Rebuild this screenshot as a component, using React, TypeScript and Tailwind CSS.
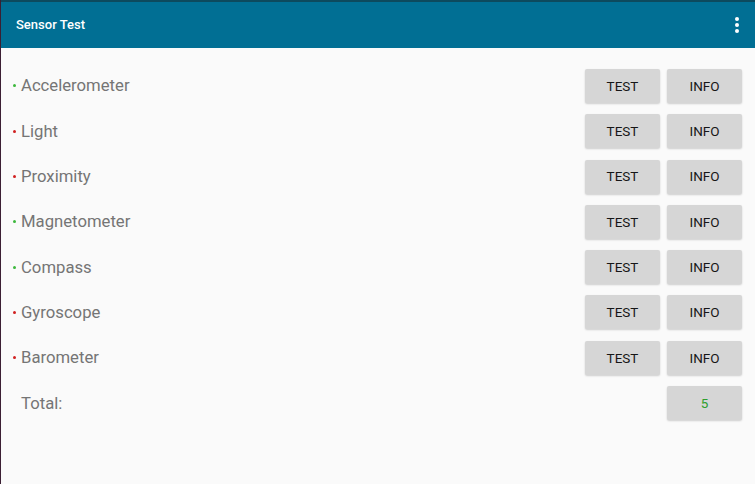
const SENSORS = [
  { name: 'Accelerometer', ok: true },
  { name: 'Light', ok: false },
  { name: 'Proximity', ok: false },
  { name: 'Magnetometer', ok: true },
  { name: 'Compass', ok: true },
  { name: 'Gyroscope', ok: false },
  { name: 'Barometer', ok: false },
]

function Btn({ children, className = '' }: { children: React.ReactNode; className?: string }) {
  return (
    <div
      className={`w-[75px] h-[34px] flex items-center justify-center rounded-[2px] bg-[#d6d6d6] text-[13.5px] font-normal shadow-[0_1px_2px_rgba(0,0,0,0.18)] ${className}`}
    >
      {children}
    </div>
  )
}

export default function App() {
  return (
    <div
      className="w-[755px] h-[484px] bg-[#fafafa] flex flex-col overflow-hidden border-l border-[#3b1f33]"
      style={{ fontFamily: 'Roboto, "Noto Sans", sans-serif' }}
    >
      {/* Toolbar */}
      <div className="h-[2px] bg-[#0d4a5e]" />
      <div className="h-[46px] bg-[#016f94] flex items-center justify-between pl-[15px] pr-[16px]">
        <span className="text-white text-[13px] font-medium">Sensor Test</span>
        <div className="flex flex-col gap-[2px]">
          <span className="w-[4px] h-[4px] rounded-full bg-white" />
          <span className="w-[4px] h-[4px] rounded-full bg-white" />
          <span className="w-[4px] h-[4px] rounded-full bg-white" />
        </div>
      </div>

      {/* Sensor list */}
      <div className="flex flex-col gap-[11.3px] pt-[21px] pl-[12px] pr-[13px]">
        {SENSORS.map(s => (
          <div key={s.name} className="flex items-center justify-between">
            <div className="flex items-center">
              <span className={`w-[3px] h-[3px] rounded-full ${s.ok ? 'bg-[#3cb83c]' : 'bg-[#d02020]'}`} />
              <span className="ml-[5px] text-[16.7px] text-[#757575]">{s.name}</span>
            </div>
            <div className="flex gap-[7px] text-[#161616]">
              <Btn>TEST</Btn>
              <Btn>INFO</Btn>
            </div>
          </div>
        ))}
        <div className="flex items-center justify-between">
          <span className="ml-[8px] text-[16.7px] text-[#757575]">Total:</span>
          <Btn className="text-[#2e9e2e]">5</Btn>
        </div>
      </div>
    </div>
  )
}
